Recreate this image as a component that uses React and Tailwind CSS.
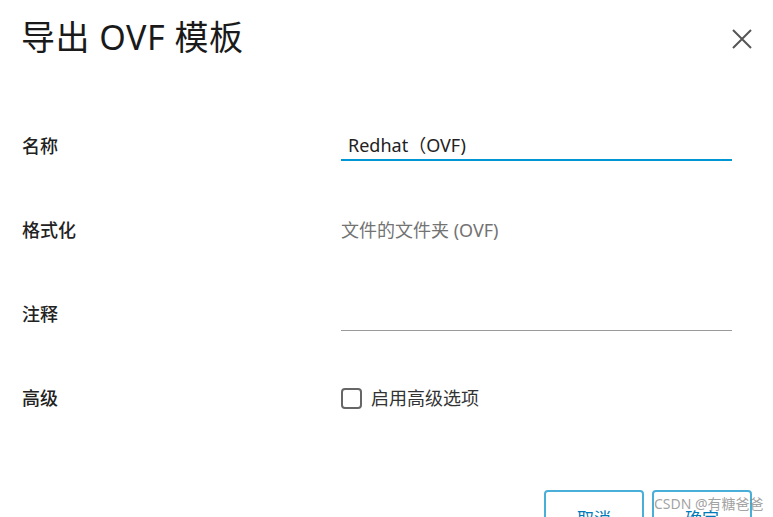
import React from 'react'

const rows = [
  { label: '名称', kind: 'input', value: 'Redhat（OVF)' },
  { label: '格式化', kind: 'text', value: '文件的文件夹 (OVF)' },
  { label: '注释', kind: 'note' },
  { label: '高级', kind: 'check', value: '启用高级选项' },
]

function App() {
  return (
    <div className="relative h-[517px] w-[773px] overflow-hidden bg-white text-[#222]" style={{ fontFamily: '"Noto Sans", "Noto Sans CJK SC", sans-serif' }}>
      <div className="flex items-start justify-between pl-[21px] pr-[20px] pt-[13px]">
        <h1 className="text-[34px] leading-[48px] font-normal tracking-[0.5px] text-[#1a1a1a]">导出 OVF 模板</h1>
        <button className="mt-[15px] h-[22px] w-[22px] text-[#555]">
          <svg viewBox="0 0 22 22" className="h-[22px] w-[22px]">
            <path d="M2 2 L20 20 M20 2 L2 20" stroke="currentColor" strokeWidth="2" fill="none" />
          </svg>
        </button>
      </div>

      <div className="mt-[43px] flex flex-col pl-[22px]">
        {rows.map((r) => (
          <div key={r.label} className="flex h-[84px] items-center">
            <div className="w-[319px] text-[18px] font-medium text-[#222]">{r.label}</div>
            {r.kind === 'input' && (
              <div className="flex h-[30px] w-[391px] items-center border-b-2 border-[#0095d3] pl-[7px] text-[18px] text-[#222]">{r.value}</div>
            )}
            {r.kind === 'text' && (
              <div className="text-[18px] text-[#737373]">{r.value}</div>
            )}
            {r.kind === 'note' && (
              <div className="mt-[2px] h-[32px] w-[391px] border-b border-[#9a9a9a]"></div>
            )}
            {r.kind === 'check' && (
              <div className="flex items-center gap-[9px]">
                <span className="h-[21px] w-[21px] rounded-[4px] border-2 border-[#666]"></span>
                <span className="text-[18px] text-[#333]">{r.value}</span>
              </div>
            )}
          </div>
        ))}
      </div>

      <div className="mt-[50px] flex justify-end gap-[8px] pr-[21px]">
        <button className="h-[50px] w-[100px] rounded-[4px] border-2 border-[#49afd9] bg-white pt-[8px] text-[17px] text-[#0079b8]">取消</button>
        <button className="h-[50px] w-[100px] rounded-[4px] border-2 border-[#49afd9] bg-white pt-[8px] text-[17px] text-[#0079b8]">确定</button>
      </div>

      <div className="absolute left-[654px] top-[493px] text-[14px] text-[#8a8a8a]/80">CSDN @有糖爸爸</div>
    </div>
  )
}

export default App
